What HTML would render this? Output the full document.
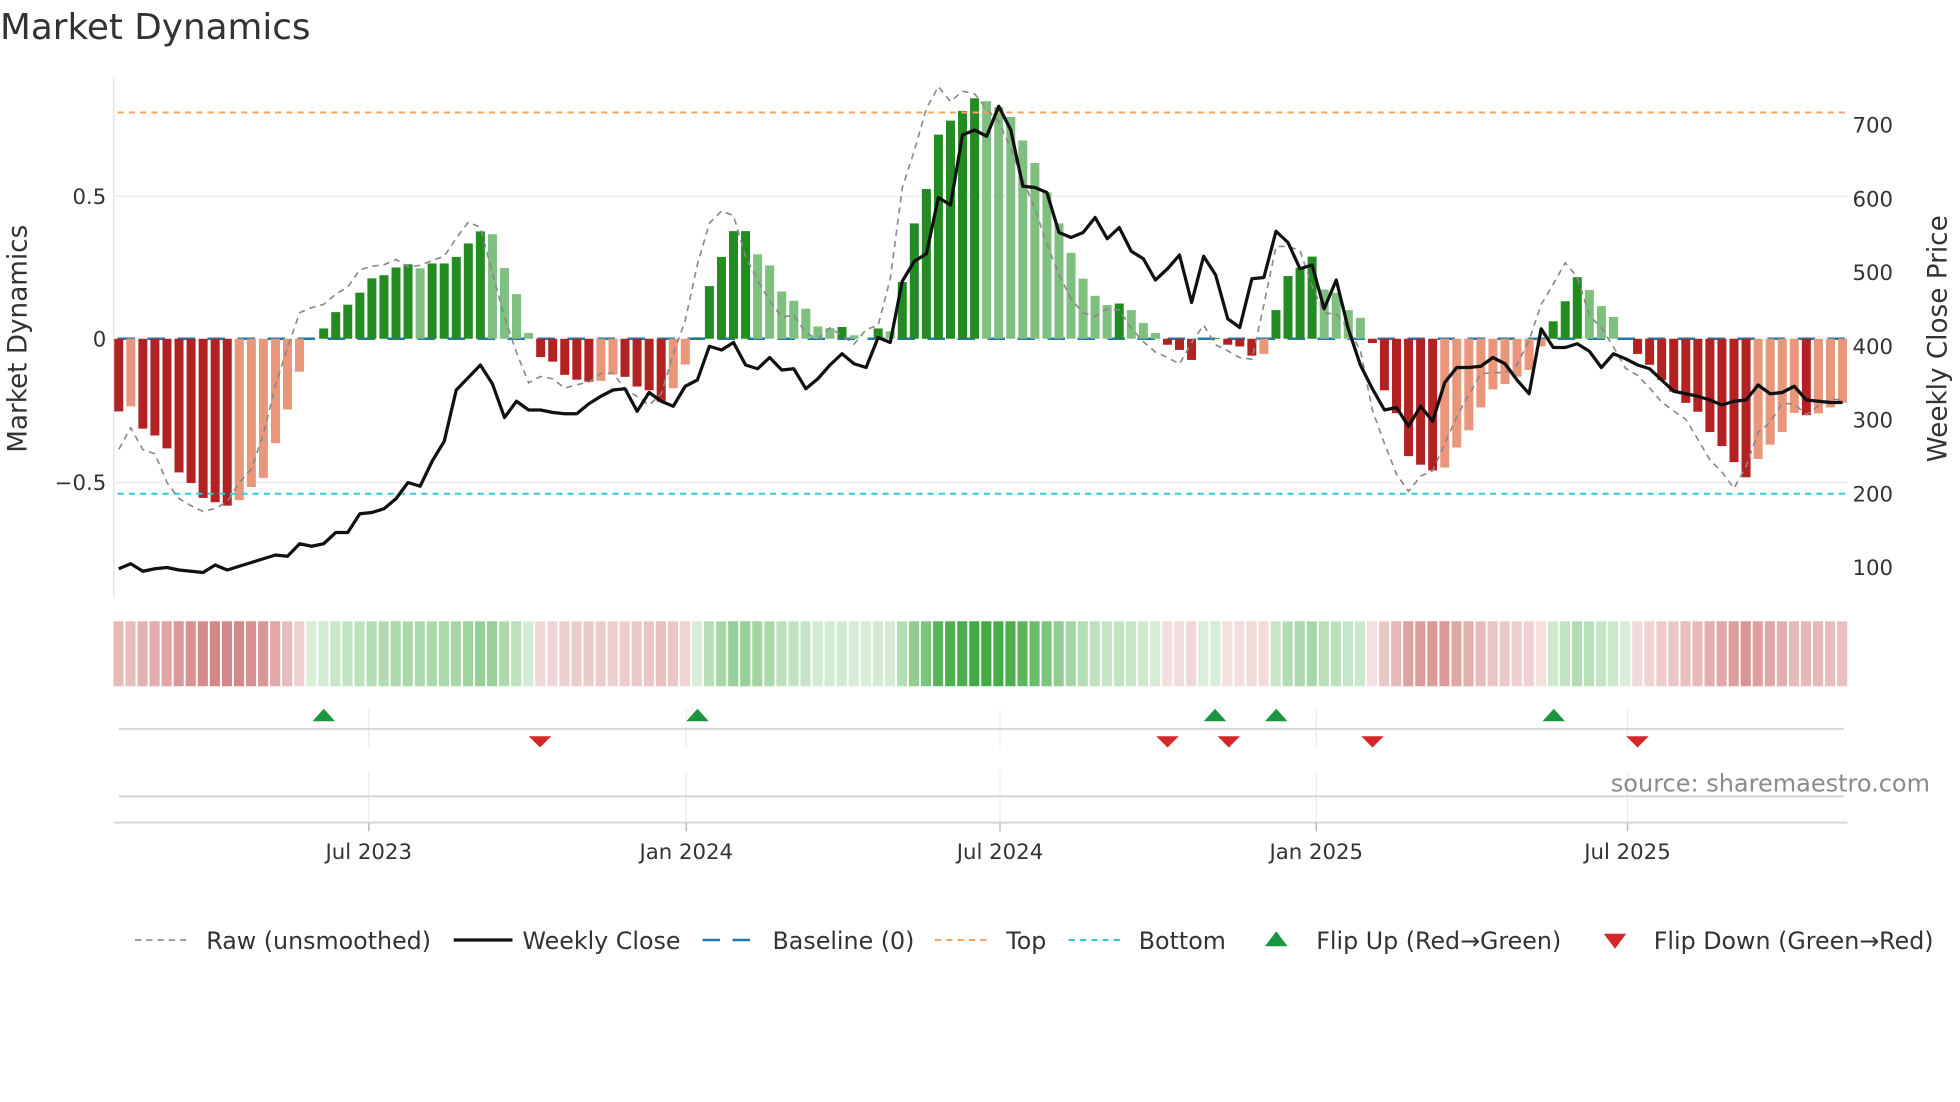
<!DOCTYPE html>
<html><head><meta charset="utf-8">
<style>
html,body{margin:0;padding:0;background:#fff;}
svg{display:block;}
text{font-family:"DejaVu Sans","Liberation Sans",sans-serif;fill:#333;}
</style></head>
<body>
<svg id="c" width="1960" height="1102" viewBox="0 0 1568 881.6" xmlns="http://www.w3.org/2000/svg">
<rect width="1568" height="882" fill="#fff"/>
<text x="0" y="31" font-size="28.6">Market Dynamics</text>
<line x1="91" y1="63" x2="91" y2="478" stroke="#e6e6ea" stroke-width="1.2"/>
<line x1="91" y1="157" x2="1478" y2="157" stroke="#eef0f2" stroke-width="1.5"/>
<line x1="91" y1="386" x2="1478" y2="386" stroke="#eef0f2" stroke-width="1.5"/>
<text x="85" y="163" font-size="17" text-anchor="end">0.5</text>
<text x="85" y="277" font-size="17" text-anchor="end">0</text>
<text x="85" y="392" font-size="17" text-anchor="end">−0.5</text>
<text transform="translate(21,271) rotate(-90)" font-size="21" text-anchor="middle">Market Dynamics</text>
<text x="1482" y="106" font-size="17">700</text>
<text x="1482" y="165" font-size="17">600</text>
<text x="1482" y="224" font-size="17">500</text>
<text x="1482" y="283" font-size="17">400</text>
<text x="1482" y="342" font-size="17">300</text>
<text x="1482" y="401" font-size="17">200</text>
<text x="1482" y="460" font-size="17">100</text>
<text transform="translate(1557,271) rotate(-90)" font-size="21" text-anchor="middle">Weekly Close Price</text>
<line x1="94" y1="271" x2="1478" y2="271" stroke="#1f77b4" stroke-width="2" stroke-dasharray="14,10"/>
<g id="bars"></g>
<line x1="94" y1="90" x2="1478" y2="90" stroke="#f4a460" stroke-width="1.6" stroke-dasharray="5,4"/>
<line x1="94" y1="395" x2="1478" y2="395" stroke="#35c9d6" stroke-width="1.6" stroke-dasharray="5,4"/>
<path id="raw" fill="none" stroke="#888" stroke-width="1.3" stroke-dasharray="5,4"/>
<path id="close" fill="none" stroke="#111" stroke-width="2.6" stroke-linejoin="round"/>
<g id="heat"></g>
<g stroke="#ececef" stroke-width="1">
<line x1="295" y1="567" x2="295" y2="598"/><line x1="549" y1="567" x2="549" y2="598"/><line x1="800" y1="567" x2="800" y2="598"/><line x1="1053" y1="567" x2="1053" y2="598"/><line x1="1302" y1="567" x2="1302" y2="598"/>
<line x1="295" y1="617" x2="295" y2="657"/><line x1="549" y1="617" x2="549" y2="657"/><line x1="800" y1="617" x2="800" y2="657"/><line x1="1053" y1="617" x2="1053" y2="657"/><line x1="1302" y1="617" x2="1302" y2="657"/>
</g>
<line x1="95" y1="583" x2="1475" y2="583" stroke="#d4d4d6" stroke-width="1.5"/>
<line x1="95" y1="637" x2="1475" y2="637" stroke="#d4d4d6" stroke-width="1.5"/>
<line x1="91" y1="658" x2="1478" y2="658" stroke="#d4d4d6" stroke-width="1.5"/>
<g stroke="#bbb" stroke-width="1.2">
<line x1="295" y1="658" x2="295" y2="665"/><line x1="549" y1="658" x2="549" y2="665"/><line x1="800" y1="658" x2="800" y2="665"/><line x1="1053" y1="658" x2="1053" y2="665"/><line x1="1302" y1="658" x2="1302" y2="665"/>
</g>
<g id="flips"></g>
<text x="1544" y="633" font-size="19.2" text-anchor="end" style="fill:#8a8a8a">source: sharemaestro.com</text>
<g font-size="17" text-anchor="middle">
<text x="295" y="687">Jul 2023</text><text x="549" y="687">Jan 2024</text><text x="800" y="687">Jul 2024</text><text x="1053" y="687">Jan 2025</text><text x="1302" y="687">Jul 2025</text>
</g>
<line x1="108" y1="752" x2="152" y2="752" stroke="#888" stroke-width="1.3" stroke-dasharray="5,4"/>
<text x="165" y="759" font-size="19">Raw (unsmoothed)</text>
<line x1="363" y1="752" x2="410" y2="752" stroke="#111" stroke-width="2.6"/>
<text x="418" y="759" font-size="19">Weekly Close</text>
<line x1="562" y1="752" x2="606" y2="752" stroke="#1f77b4" stroke-width="2" stroke-dasharray="14,10"/>
<text x="618" y="759" font-size="19">Baseline (0)</text>
<line x1="748" y1="752" x2="792" y2="752" stroke="#f4a460" stroke-width="1.6" stroke-dasharray="5,4"/>
<text x="805" y="759" font-size="19">Top</text>
<line x1="855" y1="752" x2="899" y2="752" stroke="#35c9d6" stroke-width="1.6" stroke-dasharray="5,4"/>
<text x="911" y="759" font-size="19">Bottom</text>
<polygon points="1012,757 1030,757 1021,745" fill="#1a9641"/>
<text x="1053" y="759" font-size="19">Flip Up (Red→Green)</text>
<polygon points="1283,747 1301,747 1292,759" fill="#d62728"/>
<text x="1323" y="759" font-size="19">Flip Down (Green→Red)</text>
</svg>
<script>
var V=[-0.254,-0.236,-0.314,-0.338,-0.383,-0.467,-0.504,-0.556,-0.571,-0.583,-0.564,-0.518,-0.486,-0.365,-0.247,-0.115,
0,0.036,0.093,0.119,0.161,0.211,0.222,0.249,0.26,0.246,0.263,0.263,0.286,0.333,0.375,0.365,0.247,0.156,0.02,
-0.064,-0.08,-0.126,-0.143,-0.15,-0.147,-0.125,-0.133,-0.167,-0.18,-0.22,-0.173,-0.09,
0.005,0.184,0.286,0.376,0.376,0.295,0.256,0.165,0.133,0.105,0.043,0.037,0.041,0.012,0,0.036,0.026,
0.198,0.403,0.523,0.713,0.762,0.796,0.84,0.83,0.81,0.775,0.693,0.614,0.512,0.403,0.3,0.21,0.15,0.118,0.123,
0.10,0.055,0.02,-0.021,-0.039,-0.074,0.0,0.003,-0.021,-0.027,-0.059,-0.053,
0.1,0.219,0.248,0.287,0.172,0.16,0.10,0.073,
-0.015,-0.18,-0.26,-0.41,-0.44,-0.46,-0.45,-0.38,-0.32,-0.24,-0.177,-0.158,-0.132,-0.109,-0.027,
0.061,0.131,0.215,0.17,0.114,0.076,0.002,
-0.053,-0.091,-0.144,-0.185,-0.224,-0.255,-0.326,-0.375,-0.431,-0.484,-0.42,-0.37,-0.326,-0.259,-0.267,-0.261,-0.24,-0.224];
var Y=[455,451,457,455,454,456,457,458,452,456,453,450,447,444,445,435,437,435,426,426,411,410,407,399,386,389,369,353,312,302,292,307,334,321,328,
328,330,331,331,323,317,312,311,329,314,321,325,309,304,277,280,274,292,295,286,296,295,311,303,292,283,291,294,270,274,225,209,203,158,164,108,104,109,85,104,149,150,154,186,190,186,174,191,182,
201,207,224,215,204,242,205,220,255,262,223,222,185,194,215,212,247,224,263,292,311,328,326,341,325,337,306,294,294,293,286,291,304,315,263,278,278,275,281,294,283,287,292,295,304,313,315,317,320,324,321,320,308,315,314,309,320,321,322,322];
var N=V.length, step=(1474-95)/(N-1), ns="http://www.w3.org/2000/svg";
var bars=document.getElementById("bars"), heat=document.getElementById("heat");
function el(t,a,p){var e=document.createElementNS(ns,t);for(var k in a)e.setAttribute(k,a[k]);p.appendChild(e);return e;}
var u=229, z=271, raw="", cl="";
for(var i=0;i<N;i++){
 var x=95+i*step, v=V[i], pv=i>0?V[i-1]:0;
 var grow=Math.abs(v)>=Math.abs(pv)||(v*pv<0);
 var fill=v>=0?(grow?"#228b22":"#7fbf7f"):(grow?"#b22222":"#e9967a");
 var h=Math.abs(v)*u;
 if(h>0.5) el("rect",{x:x-3.6,y:v>=0?z-h:z,width:7.2,height:h,fill:fill},bars);
 var a=v>=0?Math.min(0.92,0.18+0.85*Math.abs(v)):Math.min(0.6,0.13+0.72*Math.abs(v));
 el("rect",{x:x-4.3,y:497,width:8.1,height:52,fill:v>=0?"#2ca02c":"#b22222","fill-opacity":a},heat);
 var nv=i<N-1?V[i+1]:v, r=v+1.1*(nv-v)+0.6*(v-pv);
 raw+=(i?"L":"M")+x.toFixed(1)+","+(z-r*u).toFixed(1);
 cl+=(i?"L":"M")+x.toFixed(1)+","+Y[Math.min(i,Y.length-1)];
}
document.getElementById("raw").setAttribute("d",raw);
document.getElementById("close").setAttribute("d",cl);
var fl=document.getElementById("flips");
[259,558,972,1021,1243].forEach(function(x){el("polygon",{points:(x-9)+",577 "+(x+9)+",577 "+x+",567",fill:"#1a9641"},fl);});
[432,934,983,1098,1310].forEach(function(x){el("polygon",{points:(x-9)+",589 "+(x+9)+",589 "+x+",598",fill:"#d62728"},fl);});
</script>
</body></html>
